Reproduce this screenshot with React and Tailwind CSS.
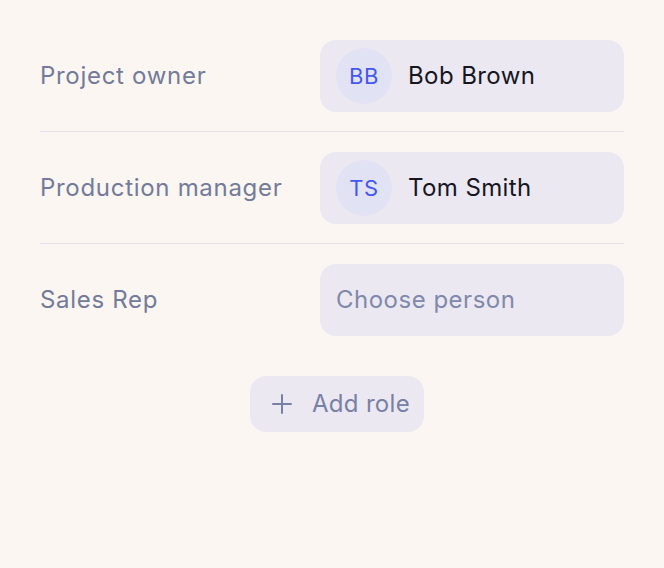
const roles = [
  { label: 'Project owner', person: { initials: 'BB', name: 'Bob Brown' } },
  { label: 'Production manager', person: { initials: 'TS', name: 'Tom Smith' } },
  { label: 'Sales Rep', person: null },
];

function PersonField({ person }) {
  if (!person) {
    return (
      <div className="w-[304px] h-[72px] rounded-2xl bg-[#ebe8f2] flex items-center px-4">
        <span className="text-[24px] tracking-[0.5px] text-[#8088ab]">Choose person</span>
      </div>
    );
  }
  return (
    <div className="w-[304px] h-[72px] rounded-2xl bg-[#ebe8f2] flex items-center px-4 py-2 gap-4">
      <div className="w-14 h-14 rounded-full bg-[#e2e2f5] flex items-center justify-center text-[22px] tracking-[0.5px] text-[#4457f2]">
        {person.initials}
      </div>
      <span className="text-[24px] tracking-[0.4px] text-[#16161f]">{person.name}</span>
    </div>
  );
}

export default function App() {
  return (
    <div
      className="min-h-screen w-full bg-[#fbf6f1] px-10 pt-5"
      style={{ fontFamily: 'Inter, "Noto Sans", sans-serif' }}
    >
      <div className="w-[584px]">
        {roles.map((r, i) => (
          <div
            key={r.label}
            className={`flex items-center justify-between pt-5 ${i < roles.length - 1 ? 'pb-[19px] border-b border-[#e4e0ee]' : 'pb-5'}`}
          >
            <span className="text-[24px] tracking-[0.7px] text-[#737b9a]">{r.label}</span>
            <PersonField person={r.person} />
          </div>
        ))}
        <div className="flex justify-center pt-5 pl-[10px]">
          <button className="w-[174px] h-14 rounded-2xl bg-[#ebe8f2] flex items-center gap-5 pl-[22px] text-[#7880a5]">
            <svg width="20" height="20" viewBox="0 0 20 20" fill="none" stroke="currentColor" strokeWidth="2" strokeLinecap="round">
              <path d="M10 1v18M1 10h18" />
            </svg>
            <span className="text-[24px] tracking-[0.3px]">Add role</span>
          </button>
        </div>
      </div>
    </div>
  );
}
